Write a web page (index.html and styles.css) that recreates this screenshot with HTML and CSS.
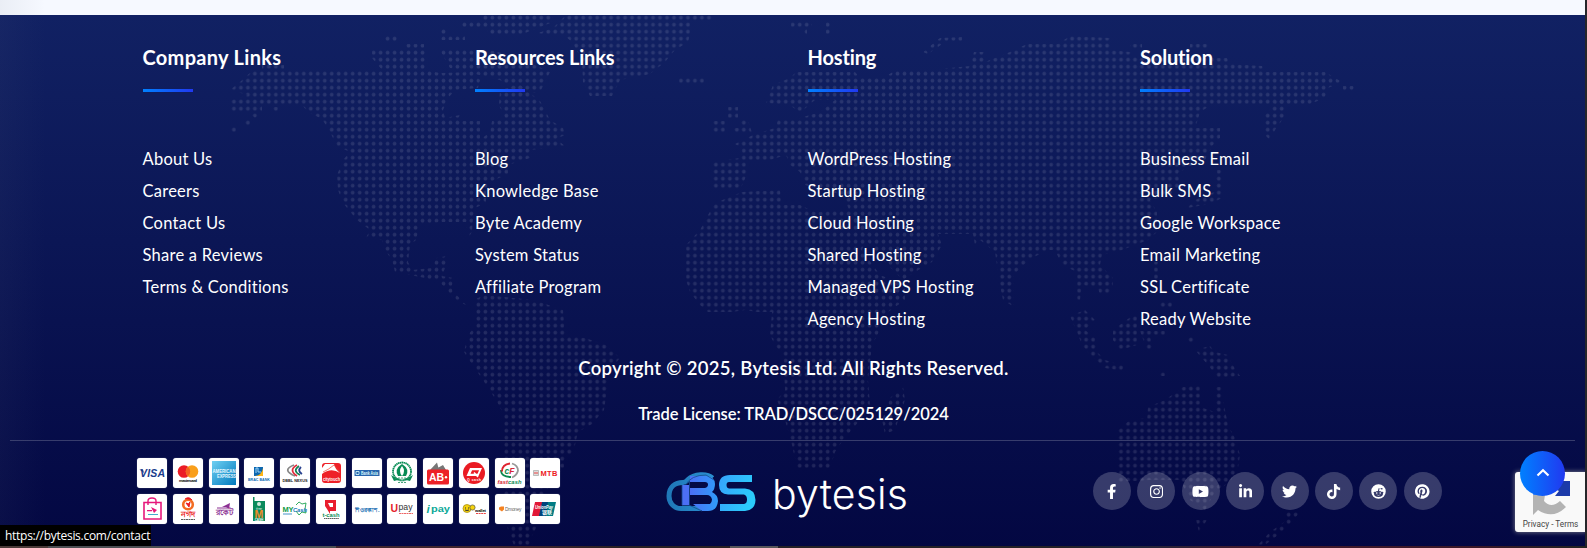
FILE: index.html
```html
<!DOCTYPE html>
<html lang="en">
<head>
<meta charset="utf-8">
<title>Bytesis</title>
<link rel="stylesheet" href="styles.css">
</head>
<body>
<div class="page">
<footer class="footer">
  <svg class="map" width="1587" height="548" viewBox="0 0 1587 548" aria-hidden="true">
    <defs>
      <pattern id="dots" x="251.4" y="14.2" width="6.985" height="7" patternUnits="userSpaceOnUse"><circle cx="3.49" cy="3.5" r="1.9" fill="#fff"/></pattern>
    </defs>
    <g fill="url(#dots)">
      <!-- North America -->
      <path d="M252 71H383L372 58V50H425V70L440 73 472 72 480 80 478 88 455 90 449 97 443 110 445 118 460 115 462 121H480V140L490 132 492 121 505 118 499 105 500 90 520 85 540 101 545 110 550 120 563 128 565 135 556 139 565 146 530 150V158L508 165V174L490 182 486 192V203L475 208 473 218 472 232 468 238 466 222H440L420 225 416 240 410 245 408 262 412 270 432 268 436 258 447 256 445 268 442 276 453 278 452 290 466 305 455 300 440 282 425 278 395 272 392 260 385 250 382 240 366 238 370 230 357 220 343 203 338 190 337 175 343 160 350 152 337 146 329 130 322 119 308 112 302 105H262V112L255 118 248 112H230L231 100 248 95 230 90 240 82Z"/>
      <path d="M460 22H483V15H553V22L520 35H490L485 27H462ZM384 36H398V42H384ZM405 44H424V48H405ZM440 50H490L520 58 550 72 540 92 520 95 500 80 450 68ZM262 65H284V70H262ZM441 36H465V40H441ZM441 29H446V34H441ZM230 126H236V132H230ZM244 120H250V126H244ZM272 107H278V112H272Z"/>
      <!-- Greenland, Iceland, Svalbard -->
      <path d="M566 15H712V20L690 22V34L688 42 675 50 665 62 650 74 620 80 612 96H590L583 82 582 60 572 42 565 36 535 34 553 28ZM679 78H704V84H679ZM791 22H812V28H807V36H803V28H791ZM826 22H830V34H826ZM923 52 935 42 940 38 962 37V41L945 42 928 54Z"/>
      <!-- South America -->
      <path d="M484 295 534 300 563 310 565 335 585 338 606 345 620 358 610 370 607 390 604 410 592 424 578 432 575 445 572 453 564 460V468L552 480 545 495 540 520 530 540 535 548H515L508 530 503 500 504 415 496 400 483 380 476 370 464 352 468 335 476 325 474 300Z"/>
      <!-- Africa and Madagascar -->
      <path d="M742 192 780 190 782 205H800L815 212 850 210 870 230 862 250 880 275 905 285V300L888 312 880 330 872 345 868 380 870 405 860 420 850 432 843 440 835 452 830 468H797L792 445 785 420 777 400 785 390 783 355 775 345 770 335 772 312H757L745 310 732 312H708L700 305 690 292 686 280V245L700 230 708 215 715 203ZM903 387 905 400 895 430 885 434 882 420 890 398Z"/>
      <!-- Europe and Asia -->
      <path d="M766 103 773 85 790 78 796 72H855L860 78H883L896 70H930L970 66 974 52H985V62L1010 52 1027 44H1058L1070 36 1110 38V50L1130 52 1137 58H1227L1230 64 1262 66 1265 72H1325L1342 82 1328 88 1325 98 1310 104H1213L1200 112 1198 119 1195 128H1220V138L1212 146 1205 160 1190 166 1178 173 1180 185 1170 195 1150 200 1157 212V232L1148 240 1122 250 1102 255 1100 265 1113 278V287L1108 295H1100L1098 288 1082 285 1080 300H1077V272L1062 265 1055 250H1048L1032 258 1020 268 1014 275V307L1003 300 1000 285 995 252 980 240 975 245 973 234H938L942 245 932 262 915 272 903 280 885 262 862 235 850 212 843 195 805 185 800 172 790 165 786 155 770 160H745L748 172 740 190H713V162L740 158 742 148 735 144 755 134 775 128 778 120 800 118 820 112 835 100H815L808 106 800 113 790 105Z"/>
      <path d="M713 121H725V134H713ZM728 107H738V118H728ZM741 120H748L752 133H733V128H741ZM1130 44H1142V49H1130ZM1190 44H1208V49H1190ZM1343 86H1355V92H1343ZM1285 92V116L1275 130 1270 140 1265 135V115L1278 100ZM1217 170H1223L1222 198 1210 204 1187 208 1195 200 1214 192Z"/>
      <!-- Islands of south-east Asia -->
      <path d="M1070 316 1085 310 1095 320 1085 330 1095 338 1097 352 1105 360 1124 366 1122 371 1105 368 1090 355 1082 345 1077 332ZM1113 330 1132 316H1137V345L1120 350 1113 340ZM1160 302H1172V308H1160ZM1154 262H1158V280H1154ZM1140 331H1165V335H1150L1153 350H1147ZM1195 350 1210 346 1215 352 1228 355 1232 364 1240 376 1218 378 1208 365ZM1188 337H1194V343H1188ZM1160 372H1165V376H1160Z"/>
      <!-- Australia and New Zealand -->
      <path d="M1183 387 1200 385V407L1215 412 1216 387H1222L1224 405 1228 425 1235 438 1240 455 1238 468 1230 482 1215 492 1205 510 1190 500 1180 480H1150L1118 482V430L1130 420 1147 418 1148 407 1165 400 1172 395ZM1196 520H1207L1199 532ZM1285 512H1300L1290 524 1278 535 1265 545H1258L1270 532 1284 522Z"/>
    </g>
  </svg>

  <nav class="columns">
    <section class="column">
      <h2 class="column-title wide">Company Links</h2>
      <ul class="links"><li>About Us</li><li>Careers</li><li>Contact Us</li><li>Share a Reviews</li><li>Terms &amp; Conditions</li></ul>
    </section>
    <section class="column">
      <h2 class="column-title">Resources Links</h2>
      <ul class="links"><li>Blog</li><li>Knowledge Base</li><li>Byte Academy</li><li>System Status</li><li>Affiliate Program</li></ul>
    </section>
    <section class="column">
      <h2 class="column-title">Hosting</h2>
      <ul class="links"><li>WordPress Hosting</li><li>Startup Hosting</li><li>Cloud Hosting</li><li>Shared Hosting</li><li>Managed VPS Hosting</li><li>Agency Hosting</li></ul>
    </section>
    <section class="column">
      <h2 class="column-title">Solution</h2>
      <ul class="links"><li>Business Email</li><li>Bulk SMS</li><li>Google Workspace</li><li>Email Marketing</li><li>SSL Certificate</li><li>Ready Website</li></ul>
    </section>
  </nav>

  <p class="copyright">Copyright © 2025, Bytesis Ltd. All Rights Reserved.</p>
  <p class="license">Trade License: TRAD/DSCC/025129/2024</p>
  <hr class="divider">

  <div class="bottom">
    <div class="payments">
      <svg class="pay" viewBox="0 0 30 30"><text x="3" y="19.3" font-size="10.5" font-weight="900" font-style="italic" fill="#1a3c8c" textLength="25">VISA</text><path d="M2.5 11.5H6L7 15Z" fill="#1a3c8c"/></svg>
      <svg class="pay" viewBox="0 0 30 30"><circle cx="11" cy="13.5" r="6.3" fill="#eb1c26"/><circle cx="19" cy="13.5" r="6.3" fill="#f99f1b"/><path d="M15 8.7a6.3 6.3 0 0 1 0 9.6 6.3 6.3 0 0 1 0-9.6" fill="#f26322"/><text x="6" y="23.5" font-size="4" font-weight="700" textLength="18">mastercard</text></svg>
      <svg class="pay" viewBox="0 0 30 30"><defs><linearGradient id="ax" x2="1" y2="1"><stop stop-color="#6fd0f2"/><stop offset="1" stop-color="#0079bd"/></linearGradient></defs><path d="M3 3H27V27H3Z" fill="url(#ax)"/><g fill="#e8f8ff" font-size="4.6" font-weight="900"><text x="3.5" y="14.5" textLength="23" lengthAdjust="spacingAndGlyphs">AMERICAN</text><text x="8" y="20" textLength="19" lengthAdjust="spacingAndGlyphs">EXPRESS</text></g></svg>
      <svg class="pay" viewBox="0 0 30 30"><path d="M10 9h9v9h-9z" fill="#0c67b1"/><path d="M19 10v8h-8q7-1 8-8z" fill="#fdb515"/><path d="M12 15V10h2v4h3" stroke="#9fd5f5" fill="none"/><text x="4" y="22.5" font-size="4" font-weight="900" fill="#0b6ab4" textLength="22" lengthAdjust="spacingAndGlyphs">BRAC BANK</text></svg>
      <svg class="pay" viewBox="0 0 30 30"><g fill="none" stroke-width="1.8"><path d="M14 7q-13 5 1 11" stroke="#888"/><path d="M17 7q-9 5 0 11" stroke="#e32a3b"/><path d="M19 8q-7 5 1 9" stroke="#188353"/><path d="M21 9q-4 4 1 7" stroke="#28408f"/></g><text x="2.5" y="23.5" font-size="4" font-weight="900" fill="#222" textLength="25" lengthAdjust="spacingAndGlyphs">DBBL NEXUS</text></svg>
      <svg class="pay" viewBox="0 0 30 30"><rect x="6" y="5" width="19" height="20" rx="3" fill="#ee2027"/><path d="M6 16q9-7 18-1-5-4-6-9l-9 0-3 4z" fill="#fff"/><path d="M7 14q5-2 11-7l6 7" fill="none" stroke="#e43" stroke-width=".7"/><text x="7" y="22.5" font-size="4.5" font-weight="700" fill="#fff" textLength="17" lengthAdjust="spacingAndGlyphs">citytouch</text></svg>
      <svg class="pay" viewBox="0 0 30 30"><path d="M2.500 12h25v6h-25z" fill="#2765ad"/><path d="M4 13.500h3v3H4z" fill="none" stroke="#dff" stroke-width=".8"/><text x="9" y="17" font-size="5" font-weight="700" fill="#dff" textLength="17" lengthAdjust="spacingAndGlyphs">Bank Asia</text></svg>
      <svg class="pay" viewBox="0 0 30 30"><circle cx="15" cy="13.500" r="9" fill="none" stroke="#078b54" stroke-width="1.800" stroke-dasharray="1.500 .4"/><path d="M11 18q-4-7 4-12 8 5 4 12z" fill="#078b54"/><path d="M15 8q4 5 0 10-4-5 0-10" fill="#fff"/><path d="M4 17q11 8 22 0l-3 6-8-2-8 2z" fill="#078b54"/><path d="M8 20h14M11 24.500h9" stroke="#3a9a70" stroke-width=".9" stroke-dasharray="2 1"/></svg>
      <svg class="pay" viewBox="0 0 30 30"><path d="M7 12 14 4.500l2 7.500zM11 12 20 7l3 5z" fill="#777"/><rect x="4" y="11.500" width="22" height="15" rx="1.500" fill="#ed2127"/><text x="6" y="23" font-size="10.500" font-weight="700" fill="#fff">AB</text><circle cx="23" cy="19.300" r="1.200" fill="#fff"/></svg>
      <svg class="pay" viewBox="0 0 30 30"><circle cx="15" cy="15" r="11" fill="#ea1b23"/><path d="M7.500 18l3.500-8h12l-3.500 8zM11.500 15.800h7l1.600-3.600h-7z" fill="#fff" fill-rule="evenodd"/><path d="M15 14.500l4 4.500" stroke="#fff" stroke-width="1.500"/><text x="8" y="23.300" font-size="3.500" font-weight="700" fill="#fff" textLength="14">Q cash</text></svg>
      <svg class="pay" viewBox="0 0 30 30"><g fill="none" stroke-width="1.800"><path d="M16 19Q6 19 6 12" stroke="#0b8a50"/><path d="M15 5.500q-8 1-8 8" stroke="#df2631"/><path d="M17 5.500q6 2 6 7-1 5-6 7" stroke="#999"/></g><text x="9.500" y="16" font-size="8.500" font-weight="900" font-style="italic" fill="#d62838"><tspan fill="#0b8a50">c</tspan>F</text><text x="2.500" y="25.500" font-size="5.800" font-weight="700" font-style="italic" fill="#d62838" textLength="24">fast<tspan fill="#078b54">cash</tspan></text></svg>
      <svg class="pay" viewBox="0 0 30 30"><path d="M3.500 12.500h5v5h-5z" fill="#ddd" stroke="#999" stroke-width=".6"/><path d="M4 15h4" stroke="#e44"/><text x="10.500" y="18" font-size="7.500" font-weight="900" fill="#ed1c24" textLength="17">MTB</text></svg>

      <svg class="pay" viewBox="0 0 30 30"><path d="M7 8.500h17V25H7z" fill="none" stroke="#e6177b" stroke-width="1.600"/><path d="M11 11V7q0-3 4-3t4 3v4" fill="none" stroke="#e6177b" stroke-width="1.400"/><path d="M14 13l6 3-3 3zM10 16h5v1.300h-5z" fill="#e6177b"/><path d="M11 20.500h10" stroke="#4ac"/></svg>
      <svg class="pay" viewBox="0 0 30 30"><circle cx="15" cy="10.500" r="4.800" fill="none" stroke="#f36d22" stroke-width="2.600"/><path d="M12 5q4-3 7 1M13 9q3 2 4-1l-1 5z" stroke="#ec1c24" fill="#ec1c24"/><text x="15" y="22.500" text-anchor="middle" font-size="7.500" font-weight="700" fill="#ec1c24">নগদ</text><path d="M8 25.500h14" stroke="#333" stroke-width=".8" stroke-dasharray="2 .5"/></svg>
      <svg class="pay" viewBox="0 0 30 30"><path d="M13 13l8-4-1 6-3-2z" fill="#8b2f92"/><path d="M8 14h11" stroke="#8b2f92"/><text x="15" y="21" text-anchor="middle" font-size="8" font-weight="700" fill="#8b2f92">রকেট</text></svg>
      <svg class="pay" viewBox="0 0 30 30"><path d="M9 3h1.500v4H21v20H9z" fill="#0a8a5c"/><circle cx="15" cy="10" r="2" fill="#cfe9dd"/><text x="10.500" y="23.500" font-size="10.500" font-weight="900" fill="#f28c28">M</text><text x="11.500" y="15.500" font-size="3" fill="#fff">টাকা</text><text x="10.700" y="26.500" font-size="3" font-weight="700" fill="#fff">CASH</text></svg>
      <svg class="pay" viewBox="0 0 30 30"><path d="M16 11l3-3 3 2 4-1-1 6 1 4-4-1-3 3-3-4" fill="none" stroke="#1da450" stroke-width=".9"/><text x="2.500" y="18" font-size="7.500" font-weight="900" fill="#149b48" textLength="11">MY</text><text x="13" y="18" font-size="5.800" font-weight="900" font-style="italic" fill="#1878bd" textLength="14">Cash</text><path d="M3 20h9" stroke="#1878bd" stroke-width=".8"/></svg>
      <svg class="pay" viewBox="0 0 30 30"><path d="M9 6h11v11h-6v3l-3-5-2-3z" fill="#e91d2d"/><path d="M12 9h5v4h-3z" fill="#fff"/><text x="6.500" y="22.500" font-size="5.800" font-weight="700" fill="#0c8d56" textLength="17">t-cash</text><path d="M8 24.500h15" stroke="#333" stroke-width=".8" stroke-dasharray="1.500 .4"/></svg>
      <svg class="pay" viewBox="0 0 30 30"><text x="2.500" y="17.500" font-size="6" font-weight="700" fill="#0a64ad" textLength="25" lengthAdjust="spacingAndGlyphs">শিওরক্যাশ.</text></svg>
      <svg class="pay" viewBox="0 0 30 30"><text x="3.500" y="18" font-size="10.500" font-weight="700" fill="#e51b29">U</text><text x="11.500" y="16" font-size="8.500" fill="#333" textLength="14" lengthAdjust="spacingAndGlyphs">pay</text><path d="M12 19.500h14" stroke="#e66" stroke-dasharray="2 .5"/></svg>
      <svg class="pay" viewBox="0 0 30 30"><text x="3.500" y="18.500" font-size="11.500" font-weight="900" font-style="italic" fill="#0ca897">i</text><text x="8" y="18" font-size="9.500" font-weight="700" fill="#0ca897" textLength="19" lengthAdjust="spacingAndGlyphs">pay</text></svg>
      <svg class="pay" viewBox="0 0 30 30"><circle cx="8" cy="14.500" r="4" fill="#f5d20c" stroke="#a98f18" stroke-width=".8"/><circle cx="13.500" cy="13.500" r="2.600" fill="#f5d20c" stroke="#554" stroke-width=".7"/><path d="M6 14h1M9 14h1M6 16q2 1 4 0" stroke="#333" fill="none"/><text x="16" y="17.500" font-size="4.200" font-weight="700" textLength="11">wallet</text><path d="M17 19.500h10" stroke="#e44" stroke-dasharray="2 .6"/></svg>
      <svg class="pay" viewBox="0 0 30 30"><path d="M4 13.500l2-1h3v3l-2 2-3-2z" fill="#f58220"/><text x="10" y="17" font-size="4.800" fill="#666" textLength="16.500">Dmoney</text></svg>
      <svg class="pay" viewBox="0 0 30 30"><path d="M5 8h8l-3 14H2z" fill="#e21836"/><path d="M12 8h8l-3 14H9z" fill="#00447c"/><path d="M18 8h8l-3 14h-7z" fill="#007b84"/><text x="5" y="14.500" font-size="4.600" font-weight="700" font-style="italic" fill="#fff" textLength="18" lengthAdjust="spacingAndGlyphs">UnionPay</text><text x="12" y="19.800" font-size="5" font-weight="700" fill="#fff">银联</text></svg>
    </div>

    <div class="brand">
      <svg class="brand-mark" width="90" height="40" viewBox="0 0 90 40">
        <defs>
          <linearGradient id="cl" x2="1"><stop stop-color="#1f78b8"/><stop offset="1" stop-color="#2a8fd0"/></linearGradient>
          <linearGradient id="bb" x2="1"><stop stop-color="#4c6ff5"/><stop offset="1" stop-color="#2f9dfb"/></linearGradient>
          <linearGradient id="ss" x2="1" y2=".3"><stop stop-color="#36a3fc"/><stop offset="1" stop-color="#2bcbfb"/></linearGradient>
        </defs>
        <path d="M35 36.500H15C7 36.500 3 30 3 24 3 15 9 10.500 17 10.500 20 10.500 20.500 9 22 7.500 28 1.800 41 1 46.500 6" fill="none" stroke="url(#cl)" stroke-width="5"/>
        <path d="M24 4H41Q49 5 49 12 49 17 46 20 52 23 52 29 51 39 42 39H36L27 32H44Q46 30 46 27.500 45 23 41 23H24V16H39Q42 15 42 12.500 42 10 39 10H24Z" fill="url(#bb)"/>
        <path d="M16 13H23V33H16Z" fill="#4c6ff5"/>
        <path d="M19.500 13Q25 3 40 3L48 8M23.500 9V33M16 33.500H24L36 39M16 13V33" fill="none" stroke="#174a90" stroke-width=".8"/>
        <path d="M86 3H64Q53 3 53 13 53 22 62 22.500H78Q81 23.500 81 27.500 81 31.500 78 32H54V39H79Q89.500 38 89.500 28 89 17 79 16.500H63Q60.500 16 60.500 13 60.500 10 63 10H86Z" fill="url(#ss)"/>
      </svg>
      <span class="brand-name">bytesis</span>
    </div>

    <div class="social">
      <span class="circle"><svg height="15" viewBox="0 0 320 512"><path d="M279 288l14-93h-89v-60c0-25 12-50 52-50h41V7s-37-7-72-7c-73 0-121 44-121 125v70H23v93h81v224h100V288z"/></svg></span>
      <span class="circle"><svg height="15" viewBox="0 0 448 512"><path d="M224 141c-64 0-115 51-115 115s51 115 115 115 115-51 115-115-51-115-115-115zm0 190c-41 0-75-34-75-75s34-75 75-75 75 34 75 75-34 75-75 75zm146-194c0 15-12 27-27 27s-27-12-27-27 12-27 27-27 27 12 27 27zm76 27c-2-36-10-68-36-94s-58-34-94-36c-37-2-148-2-185 0-36 2-68 10-94 36s-34 58-36 94c-2 37-2 148 0 185 2 36 10 68 36 94s58 34 94 36c37 2 148 2 185 0 36-2 68-10 94-36s34-58 36-94c2-37 2-148 0-185zm-48 225c-8 20-23 35-43 43-29 12-99 9-131 9s-102 3-131-9c-20-8-35-23-43-43-12-29-9-99-9-131s-3-102 9-131c8-20 23-35 43-43 29-12 99-9 131-9s102-3 131 9c20 8 35 23 43 43 12 29 9 99 9 131s3 102-9 131z"/></svg></span>
      <span class="circle"><svg height="15" viewBox="0 0 576 512"><path d="M550 124c-6-24-25-42-49-49-42-11-213-11-213-11s-171 0-213 11c-24 7-43 25-49 49-12 43-12 132-12 132s0 90 12 133c6 23 25 41 49 48 42 11 213 11 213 11s171 0 213-11c24-7 43-25 49-48 12-43 12-133 12-133s0-89-12-132zM232 338V175l143 81z"/></svg></span>
      <span class="circle"><svg height="15" viewBox="0 0 448 512"><path d="M100 448H7V149h93zM54 108C24 108 0 83 0 54a54 54 0 0 1 108 0c0 29-25 54-54 54zm394 340h-93V302c0-34-1-79-48-79-49 0-56 38-56 77v148h-93V149h89v41h1c13-24 43-49 88-49 94 0 112 62 112 143z"/></svg></span>
      <span class="circle"><svg height="15" viewBox="0 0 512 512"><path d="M459 152c1 4 1 9 1 13 0 139-106 299-299 299-59 0-115-17-161-47 8 1 16 1 25 1 49 0 94-16 130-45-46-1-85-31-98-73 7 1 13 2 20 2 9 0 19-1 27-4-48-10-84-52-84-103v-1c14 8 30 13 47 13-28-19-46-51-46-87 0-19 5-37 14-53 52 64 129 105 216 110-2-8-3-16-3-24 0-58 47-105 105-105 30 0 58 13 77 33 24-5 46-13 66-25-7 24-24 45-46 58 21-2 42-8 61-16-14 21-32 39-52 54z"/></svg></span>
      <span class="circle"><svg height="15" viewBox="0 0 448 512"><path d="M448 210c-44 0-87-14-123-39v178A163 163 0 1 1 185 188v90a75 75 0 1 0 52 71V0h88c0 7 1 15 2 22 6 32 25 61 53 79 20 13 44 20 68 20z"/></svg></span>
      <span class="circle"><svg height="15" viewBox="0 0 512 512"><path fill-rule="evenodd" d="M256 8a248 248 0 1 0 0 496 248 248 0 0 0 0-496zM373 138a26 26 0 1 1-25 37l-57-12-17 79c38 2 73 13 98 30 31-30 75 15 36 50 11 69-54 119-152 119s-163-50-152-119c-39-35 5-80 36-50 25-17 59-28 97-30l21-97 70 16c5-14 18-23 45-23zM197 283a26 26 0 1 0 0 53 26 26 0 0 0 0-53zm118 0a26 26 0 1 0 0 53 26 26 0 0 0 0-53zM202 356l-10 10c31 31 97 31 128 0l-10-10c-24 24-84 24-108 0z"/></svg></span>
      <span class="circle"><svg height="15" viewBox="0 0 496 512"><path d="M496 256a248 248 0 0 1-321 237c10-17 25-44 31-66l15-59c8 16 32 29 58 29 76 0 131-70 131-157 0-83-68-146-156-146-109 0-167 73-167 153 0 37 20 83 51 98 5 2 7 1 8-4l7-28c1-3 0-5-2-8-10-12-19-35-19-57 0-55 42-108 113-108 61 0 105 42 105 102 0 67-34 114-78 114-25 0-43-20-37-45 7-30 21-62 21-84 0-54-77-46-77 25 0 22 7 37 7 37s-25 104-29 123c-5 21-3 51-1 71A248 248 0 1 1 496 256z"/></svg></span>
    </div>
  </div>
</footer>

<div class="haze"></div>
<div class="captcha">
  <svg width="40" height="38" viewBox="0 0 40 38"><path d="M2 14H14L13 20Q20 28 29 20L35 26Q22 39 7 29L2 34Z" fill="#b3b3b3"/><path d="M39 0V15H24L28 10 18 5V0Z" fill="#1c3aa9"/><path d="M2 14Q4 3 18 0V7Q12 8 14 14Z" fill="#4285f4"/></svg>
  <span>Privacy - Terms</span>
</div>
<div class="to-top"><svg width="14" height="9" viewBox="0 0 14 9"><path d="M1.500 7.500 7 2.200 12.500 7.500" fill="none" stroke="#fff" stroke-width="2.200"/></svg></div>
<div class="status">https://bytesis.com/contact</div>
<div class="edge-right"></div>
<div class="edge-bottom"></div>
</div>
</body>
</html>
```
FILE: styles.css
```css
* { box-sizing: border-box; }
body { margin: 0; overflow: hidden; background: #f6f9ff; font-family: Lato, "Noto Sans", sans-serif; color: #fff; }
.page { position: relative; width: 1587px; height: 548px; padding-top: 15px; overflow: hidden; }
.footer { height: 533px; background: linear-gradient(180deg, #112163, #030742); }
.map { position: absolute; left: 0; top: 0; opacity: .105; clip-path: inset(15px 0 0 0); }
.columns { position: relative; display: grid; grid-template-columns: repeat(4, 332.5px); padding: 27px 0 0 142.5px; height: 319px; }
.column-title { margin: 0; height: 49px; line-height: 30px; font-size: 20px; font-weight: 700; letter-spacing: -.15px; }
.column-title.wide { letter-spacing: .3px; }
.column-title::after { content: ""; display: block; width: 50px; height: 3px; margin-top: 17px; background: linear-gradient(90deg, #0080ff, #2139f0); }
.links { list-style: none; margin: 0; padding: 52px 0 0; font-size: 16.500px; line-height: 32px; letter-spacing: .25px; }
.copyright, .license { position: relative; margin: 0; text-align: center; font-weight: 600; }
.copyright { padding-top: 19px; height: 63px; line-height: 31px; font-size: 18.500px; letter-spacing: .28px; }
.license { height: 43px; line-height: 34px; font-size: 16.500px; letter-spacing: -.05px; }
.divider { position: relative; margin: 0 12px 0 10px; border: 0; height: 1px; background: rgba(255,255,255,.2); }
.bottom { position: relative; display: grid; grid-template-columns: 529px 427px 1fr; padding: 17px 0 0 137px; align-items: start; }
.payments { display: grid; grid-template-columns: repeat(12, 30px); gap: 6px 5.750px; font-family: "Liberation Sans", "Noto Sans CJK SC", sans-serif; }
.pay { display: block; width: 30px; height: 30px; border-radius: 3px; background: #fff; box-shadow: 0 0 1px rgba(255,255,255,.6); }
.brand { display: flex; padding-top: 14px; gap: 16px; }
.brand-mark { flex: none; }
.brand-name { font: 300 41px/44px Inter, sans-serif; letter-spacing: .2px; }
.social { display: flex; gap: 6.400px; padding-top: 14px; }
.circle { display: flex; align-items: center; justify-content: center; width: 38px; height: 38px; border-radius: 50%; background: rgba(255,255,255,.2); }
.circle svg { display: block; fill: #fff; }
.haze { position: absolute; left: 0; top: 0; width: 45px; height: 548px; background: linear-gradient(90deg, rgba(90,100,130,.08), rgba(90,100,130,0)); }
.captcha { position: absolute; left: 1515px; top: 472px; width: 72px; height: 60px; display: flex; flex-direction: column; align-items: center; padding: 9px 1px 0 0; border-radius: 3px 0 0 3px; background: #f9f9f9; box-shadow: 0 0 5px rgba(160,160,160,.8); color: #444; font: 8.200px/10px Roboto, sans-serif; white-space: nowrap; }
.to-top { position: absolute; left: 1520px; top: 451px; width: 45px; height: 45px; border-radius: 50%; display: flex; align-items: center; justify-content: center; padding-bottom: 2px; background: linear-gradient(90deg, #0080ff, #2139f0); }
.status { position: absolute; left: 0; top: 525px; width: 151px; height: 21px; padding-left: 5px; background: #000; font: 12px/21px "Open Sans", "Noto Sans", sans-serif; letter-spacing: -.28px; white-space: nowrap; }
.edge-right { position: absolute; right: 0; top: 0; width: 2px; height: 548px; background: #25262a; }
.edge-bottom { position: absolute; left: 0; bottom: 0; width: 1587px; height: 2px; background: linear-gradient(90deg, #4a3a38 0 48px, #4c4e52 48px 336px, #41252d 336px 530px, #2a2023 620px 730px, #58565a 730px 778px, #262126 778px 1060px, #20263c 1130px, #451a2c 1250px, #3b1827 1480px, #222 1587px); }
```
